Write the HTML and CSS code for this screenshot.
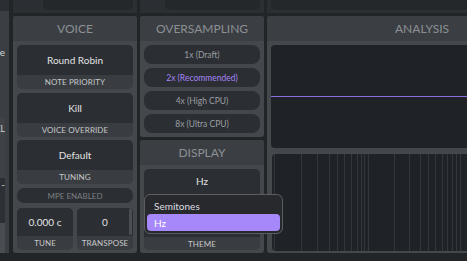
FILE: index.html
```html
<!DOCTYPE html>
<html>
<head>
<meta charset="utf-8">
<link rel="stylesheet" href="styles.css">
</head>
<body>
<div class="app">
  <div class="toprow">
    <div class="tcell tleft"></div>
    <div class="tcell tvoice"><div class="tbox"></div></div>
    <div class="tcell tcol2"><div class="tbox"></div></div>
    <div class="tcell tana"><div class="tbox"></div></div>
  </div>
  <div class="main">
    <div class="strip">
      <div class="s-space s1"></div>
      <div class="s-text s2"><span>Sine</span></div>
      <div class="s-space s3"></div>
      <div class="s-box sa"><span>LEVEL</span></div>
      <div class="s-box sb"><span>-</span></div>
      <div class="s-box sc"></div>
    </div>

    <section class="panel voice">
      <div class="phead">VOICE</div>
      <div class="pbody vbody">
        <div class="ctl"><div class="val">Round Robin</div><div class="lab">NOTE PRIORITY</div></div>
        <div class="ctl"><div class="val">Kill</div><div class="lab">VOICE OVERRIDE</div></div>
        <div class="ctl"><div class="val">Default</div><div class="lab">TUNING</div></div>
        <div class="pill mpe">MPE ENABLED</div>
        <div class="pair">
          <div class="ctl"><div class="val">0.000 c</div><div class="lab">TUNE</div></div>
          <div class="ctl scrolling"><div class="val">0</div><div class="lab">TRANSPOSE</div><span class="scroll"></span></div>
        </div>
      </div>
    </section>

    <div class="col2">
      <section class="panel over">
        <div class="phead">OVERSAMPLING</div>
        <div class="pbody obody">
          <div class="pill">1x (Draft)</div>
          <div class="pill active">2x (Recommended)</div>
          <div class="pill">4x (High CPU)</div>
          <div class="pill">8x (Ultra CPU)</div>
        </div>
      </section>
      <section class="panel display">
        <div class="phead">DISPLAY</div>
        <div class="pbody dbody">
          <div class="ctl tall"><div class="val top">Hz</div><div class="lab">THEME</div></div>
        </div>
        <div class="dropdown">
          <div class="opt">Semitones</div>
          <div class="opt sel">Hz</div>
        </div>
      </section>
    </div>

    <section class="panel analysis">
      <div class="phead">ANALYSIS</div>
      <div class="pbody abody">
        <div class="graph g1"><div class="trace"></div></div>
        <div class="graph g2">
          <span class="grid" style="left:2px"></span>
          <span class="grid" style="left:29px"></span>
          <span class="grid" style="left:45px"></span>
          <span class="grid" style="left:57px"></span>
          <span class="grid" style="left:65px"></span>
          <span class="grid" style="left:72px"></span>
          <span class="grid" style="left:79px"></span>
          <span class="grid" style="left:85px"></span>
          <span class="grid" style="left:89px"></span>
          <span class="grid" style="left:92px"></span>
          <span class="grid" style="left:96px"></span>
          <span class="grid" style="left:122px"></span>
          <span class="grid" style="left:137px"></span>
          <span class="grid" style="left:148px"></span>
          <span class="grid" style="left:156px"></span>
          <span class="grid" style="left:163px"></span>
          <span class="grid" style="left:170px"></span>
          <span class="grid" style="left:175px"></span>
          <span class="grid" style="left:180px"></span>
          <span class="grid" style="left:184px"></span>
          <span class="grid" style="left:188px"></span>
        </div>
      </div>
    </section>
  </div>
</div>
</body>
</html>
```
FILE: styles.css
```css
* { box-sizing: border-box; margin: 0; padding: 0; }

body {
  margin: 0;
  width: 467px;
  height: 261px;
  overflow: hidden;
  background: #222528;
  font-family: Lato, "Noto Sans", sans-serif;
}

.app { width: 467px; }

/* top row (bottom edge of panels above) */
.toprow { display: flex; gap: 3px; height: 13px; }
.tcell { background: #2b2e32; flex-shrink: 0; }
.tleft { width: 9px; margin-right: 1px; }
.tvoice { width: 124px; padding: 0 4px 0 30px; }
.tcol2 { width: 124px; padding: 0 4px 0 25px; }
.tana { width: 310px; padding: 0 0 0 4px; }
.tbox { height: 10px; background: #25282b; border-radius: 0 0 5px 5px; }

/* main row */
.main { display: flex; gap: 3px; margin-top: 3px; height: 237px; }

.strip {
  width: 9px;
  flex-shrink: 0;
  margin-right: 1px;
  margin-top: -5px;
  background: #3b3f43;
  padding-right: 4px;
  display: flex;
  flex-direction: column;
  overflow: hidden;
}
.s1 { height: 34px; }
.s2 { height: 14px; }
.s3 { height: 59px; }
.s-text, .s-box {
  display: flex;
  justify-content: flex-end;
  white-space: nowrap;
  color: #d6d8da;
  font-size: 10px;
  overflow: hidden;
}
.s-text { align-items: center; }
.sa { height: 60px; background: #3f4347; font-size: 8.5px; padding-top: 6px; }
.sb { height: 45px; background: #2c2f33; font-size: 10px; }
.sc { flex: 1; background: #4a4e52; }

.panel {
  background: #44484c;
  border-radius: 3px;
  display: flex;
  flex-direction: column;
  flex-shrink: 0;
}
.phead {
  height: 25px;
  flex-shrink: 0;
  background: #3b3f43;
  border-radius: 3px 3px 0 0;
  color: #8c9094;
  font-size: 12px;
  display: flex;
  align-items: center;
  justify-content: center;
}
.pbody { padding: 4px; display: flex; flex-direction: column; flex: 1; }

.voice { width: 124px; }
.vbody { gap: 3.5px; }

.ctl {
  height: 44px;
  flex-shrink: 0;
  border-radius: 5px;
  overflow: hidden;
  background: #393c40;
  display: flex;
  flex-direction: column;
  position: relative;
}
.val {
  height: 30px;
  flex-shrink: 0;
  background: #2b2e32;
  color: #e2e3e4;
  font-size: 10px;
  display: flex;
  align-items: center;
  justify-content: center;
}
.lab {
  flex: 1;
  display: flex;
  align-items: center;
  justify-content: center;
  color: #c6c8ca;
  font-size: 8px;
  letter-spacing: 0.1px;
}

.pill {
  height: 19px;
  flex-shrink: 0;
  border-radius: 8px;
  background: #2b2e32;
  color: #9b9fa3;
  font-size: 8.5px;
  display: flex;
  align-items: center;
  justify-content: center;
}
.pill.active { color: #a585f5; }
.mpe { height: 15px; margin-top: 0.5px; color: #7b7f83; font-size: 8px; border-radius: 7px; }

.pair { display: flex; gap: 4px; height: 42px; margin-top: 1.5px; }
.pair .ctl { flex: 1; height: 42px; }
.pair .val { height: 28px; }
.scroll {
  position: absolute;
  right: 1px;
  top: 0;
  width: 3px;
  height: 27px;
  border-radius: 2px;
  background: #4a4e52;
}

.col2 { width: 124px; flex-shrink: 0; display: flex; flex-direction: column; gap: 3px; }
.over { width: 124px; height: 121px; }
.obody { gap: 4px; }
.display { width: 124px; flex: 1; position: relative; }
.dbody { padding: 4px 4px 3px; }
.ctl.tall { height: auto; flex: 1; }
.val.top { flex: 1; height: auto; align-items: flex-start; padding-top: 6px; }
.tall .lab { flex: none; height: 13px; }

.dropdown {
  position: absolute;
  left: 4px;
  top: 54px;
  width: 139px;
  height: 40px;
  z-index: 10;
  background: #27292d;
  border: 1px solid #5a5e63;
  border-radius: 6px;
  padding: 2px;
  display: flex;
  flex-direction: column;
}
.opt {
  height: 17px;
  padding-left: 7px;
  display: flex;
  align-items: center;
  color: #dcdee0;
  font-size: 10px;
  border-radius: 4px;
}
.opt.sel { background: #a688fb; color: #ffffff; }

.analysis { width: 310px; }
.abody { padding: 4px 4px 2px 4px; gap: 6px; }
.graph { background: #1f2226; border-radius: 4px; }
.g1 { height: 103px; flex-shrink: 0; display: flex; align-items: center; }
.trace { width: 100%; height: 1px; background: #8b6fe3; }
.g2 { flex: 1; margin-left: 1px; position: relative; overflow: hidden; }
.grid { position: absolute; top: 0; bottom: 0; width: 1px; background: #33373b; }
```
